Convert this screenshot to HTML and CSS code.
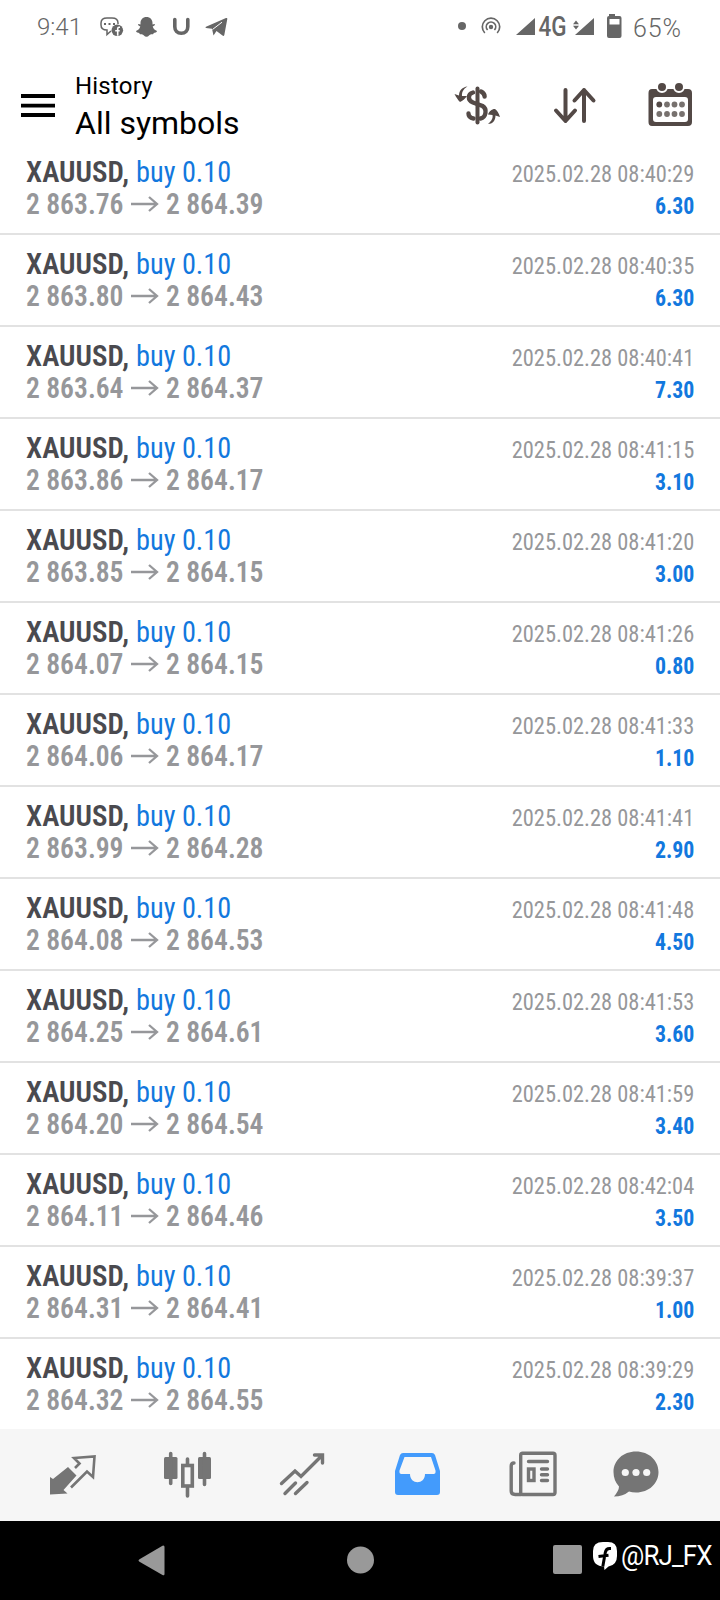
FILE: index.html
```html
<!DOCTYPE html>
<html lang="en">
<head>
<meta charset="utf-8">
<title>History</title>
<link rel="stylesheet" href="styles.css">
</head>
<body>
<main class="screen">
  <div class="status">
    <span class="clock">9:41</span>
    <svg class="status-apps" width="130" height="24" viewBox="99 15 130 24">
      <path d="M111 31l-4 3.500v-4.500c-4 0-6-2-6-5v-2c0-3 2-5 6-5h5c4 0 6 2 6 5v1" fill="none" stroke="#666" stroke-width="1.500"/>
      <path d="M104 24h2m2.500 0h2m2.500 0h2" stroke="#666" stroke-width="1.800"/>
      <circle cx="117.300" cy="30.300" r="5.800" fill="#666"/>
      <path d="M120 27.200h-1q-1.300 0-1.300 1.500v7m-2.500-5h4.500" fill="none" stroke="#fff" stroke-width="1.600"/>
      <path d="M146.500 17c3.700 0 6 2.700 6 6v1.500l2-.500c1 .5.500 1.600-1.800 2.600.8 2.500 2.400 3.800 4.300 4.400-.2 1.700-2.200 1.500-3.200 2-.5 1-.5 1.500-2.300 1.200-2-.4-2.600 2.500-5 2.500s-3-2.900-5-2.500c-1.800.3-1.800-.2-2.300-1.200-1-.5-3-.3-3.200-2 1.900-.6 3.500-1.900 4.300-4.400-2.300-1-2.800-2.100-1.800-2.600l2 .5V23c0-3.300 2.300-6 6-6z" fill="#666"/>
      <path d="M174.800 19.500v7.200c0 4 2.500 6.500 6.500 6.500s6.500-2.500 6.500-6.500v-7.200" fill="none" stroke="#666" stroke-width="3.600" stroke-linecap="round"/>
      <path d="M206 26.800L226 18q1.500-.4 1.300 1l-3 16q-.5 1.600-1.800.6l-6-4.600-3 4.500-1.500-6.800-6-.8q-1.200-.5 0-1.100z" fill="#666"/>
      <path d="M212.500 29.500l9.500-7.300" fill="none" stroke="#fff" stroke-width="1"/>
    </svg>
    <svg class="status-signal" width="169" height="28" viewBox="457 13 169 28">
      <g fill="#666"><circle cx="462" cy="26" r="4"/><circle cx="491" cy="27" r="2.200"/><path d="M516 35l19-17v17zM575 35l19-17v17zM573 24.200l3-3.700 3 3.700zM573 25.800l3 3.700 3-3.700z"/></g>
      <path d="M487.600 30a4.700 4.700 0 1 1 6.800 0M484.800 33a8.700 8.700 0 1 1 12.400 0" fill="none" stroke="#666" stroke-width="1.700"/>
      <path d="M609 16v-2h6v2h4.500q2 0 2 2v18q0 2-2 2H609q-2 0-2-2V18q0-2 2-2zM609.500 19v5.500h10V19z" fill="#666" fill-rule="evenodd"/>
      <text class="net" x="538.500" y="36" textLength="28" lengthAdjust="spacingAndGlyphs">4G</text>
    </svg>
    <span class="battery">65%</span>
  </div>
  <header class="head">
    <svg class="menu" width="34" height="24" viewBox="0 0 34 24"><path d="M0 2h34M0 11.600h34M0 21h34" stroke="#000" stroke-width="3.800"/></svg>
    <div class="titles"><div class="sub">History</div><h1>All symbols</h1></div>
    <svg width="240" height="46" viewBox="454 82 240 46">
      <g fill="none" stroke="#534946" stroke-linecap="round">
        <path d="M477.500 88.500v34" stroke-width="4"/>
        <path d="M473 92.500c-5.500 1.500-5.500 7.500 0 10l9.500 3.500c5 3 3.500 11.500-2 12.500M481 91.500c2.500 1.300 3.600 3 3.600 5M473.500 118.500c-3-.5-5-2.500-5-5" stroke-width="4.400"/>
        <path d="M565.500 90v31M556 110.500l9.500 10.500 9.500-10.500M584 121V90M574.500 100.500L584 90l9.500 10.500" stroke-width="4" stroke-linejoin="round"/>
      </g>
      <path d="M467.500 86.500c-4.500 2.500-5.800 6-5.500 9.500l5 0c-2 3-4.500 5-7 6-2-2-3.700-4.500-5.500-8l4.500 1.500c0-5 3.500-8.500 8.500-9zM488 124c4-3.500 5-6 4.500-9l-4.500-.5c1-3 3.500-5.500 7-5.500 2 1.500 3.800 4 5 8l-4.500-1.500c0 5-3 8.500-7.500 8.500z" fill="#534946"/>
      <path d="M652 89h36q4 0 4 4v29q0 4-4 4h-36q-3.500 0-3.500-4V93q0-4 3.500-4zm4 8q-3 0-3 3v19q0 3 3 3h29q3 0 3-3v-19q0-3-3-3z" fill="#534946" fill-rule="evenodd"/>
      <g fill="#534946" stroke="#fff" stroke-width="2"><circle cx="662" cy="87" r="5"/><circle cx="679" cy="87" r="5"/></g>
      <g fill="#77716e"><circle cx="659.300" cy="104.500" r="2.900" fill="#534946"/><circle cx="667" cy="104.500" r="2.900"/><circle cx="674.500" cy="104.500" r="2.900"/><circle cx="682" cy="104.500" r="2.900"/><circle cx="659.300" cy="114" r="2.900"/><circle cx="667" cy="114" r="2.900"/><circle cx="674.500" cy="114" r="2.900"/><circle cx="682" cy="114" r="2.900"/></g>
    </svg>
  </header>
  <svg class="defs" width="0" height="0"><symbol id="arrow" viewBox="0 0 28 16"><path d="M0 8h26M18 1l8 7-8 7" fill="none" stroke="#96979a" stroke-width="2.300"/></symbol></svg>
  <section class="deals">
    <article class="deal"><div class="line"><b>XAUUSD,</b><span class="side">buy 0.10</span><time>2025.02.28 08:40:29</time></div><div class="line prices"><i>2 863.76</i><svg><use href="#arrow"/></svg><i>2 864.39</i><strong>6.30</strong></div></article>
    <article class="deal"><div class="line"><b>XAUUSD,</b><span class="side">buy 0.10</span><time>2025.02.28 08:40:35</time></div><div class="line prices"><i>2 863.80</i><svg><use href="#arrow"/></svg><i>2 864.43</i><strong>6.30</strong></div></article>
    <article class="deal"><div class="line"><b>XAUUSD,</b><span class="side">buy 0.10</span><time>2025.02.28 08:40:41</time></div><div class="line prices"><i>2 863.64</i><svg><use href="#arrow"/></svg><i>2 864.37</i><strong>7.30</strong></div></article>
    <article class="deal"><div class="line"><b>XAUUSD,</b><span class="side">buy 0.10</span><time>2025.02.28 08:41:15</time></div><div class="line prices"><i>2 863.86</i><svg><use href="#arrow"/></svg><i>2 864.17</i><strong>3.10</strong></div></article>
    <article class="deal"><div class="line"><b>XAUUSD,</b><span class="side">buy 0.10</span><time>2025.02.28 08:41:20</time></div><div class="line prices"><i>2 863.85</i><svg><use href="#arrow"/></svg><i>2 864.15</i><strong>3.00</strong></div></article>
    <article class="deal"><div class="line"><b>XAUUSD,</b><span class="side">buy 0.10</span><time>2025.02.28 08:41:26</time></div><div class="line prices"><i>2 864.07</i><svg><use href="#arrow"/></svg><i>2 864.15</i><strong>0.80</strong></div></article>
    <article class="deal"><div class="line"><b>XAUUSD,</b><span class="side">buy 0.10</span><time>2025.02.28 08:41:33</time></div><div class="line prices"><i>2 864.06</i><svg><use href="#arrow"/></svg><i>2 864.17</i><strong>1.10</strong></div></article>
    <article class="deal"><div class="line"><b>XAUUSD,</b><span class="side">buy 0.10</span><time>2025.02.28 08:41:41</time></div><div class="line prices"><i>2 863.99</i><svg><use href="#arrow"/></svg><i>2 864.28</i><strong>2.90</strong></div></article>
    <article class="deal"><div class="line"><b>XAUUSD,</b><span class="side">buy 0.10</span><time>2025.02.28 08:41:48</time></div><div class="line prices"><i>2 864.08</i><svg><use href="#arrow"/></svg><i>2 864.53</i><strong>4.50</strong></div></article>
    <article class="deal"><div class="line"><b>XAUUSD,</b><span class="side">buy 0.10</span><time>2025.02.28 08:41:53</time></div><div class="line prices"><i>2 864.25</i><svg><use href="#arrow"/></svg><i>2 864.61</i><strong>3.60</strong></div></article>
    <article class="deal"><div class="line"><b>XAUUSD,</b><span class="side">buy 0.10</span><time>2025.02.28 08:41:59</time></div><div class="line prices"><i>2 864.20</i><svg><use href="#arrow"/></svg><i>2 864.54</i><strong>3.40</strong></div></article>
    <article class="deal"><div class="line"><b>XAUUSD,</b><span class="side">buy 0.10</span><time>2025.02.28 08:42:04</time></div><div class="line prices"><i>2 864.11</i><svg><use href="#arrow"/></svg><i>2 864.46</i><strong>3.50</strong></div></article>
    <article class="deal"><div class="line"><b>XAUUSD,</b><span class="side">buy 0.10</span><time>2025.02.28 08:39:37</time></div><div class="line prices"><i>2 864.31</i><svg><use href="#arrow"/></svg><i>2 864.41</i><strong>1.00</strong></div></article>
    <article class="deal"><div class="line"><b>XAUUSD,</b><span class="side">buy 0.10</span><time>2025.02.28 08:39:29</time></div><div class="line prices"><i>2 864.32</i><svg><use href="#arrow"/></svg><i>2 864.55</i><strong>2.30</strong></div></article>
  </section>
  <nav class="tabs">
    <svg width="48" height="48" viewBox="48 1450 48 48"><path d="M50 1477l3 2 15-12 8.500 8.500-13 14.500 4 3.500-17.500 1z" fill="#757575"/><path d="M75 1468l4.500-4.500-5.500-5.500 20.500-1.500-1.500 20.500-6-5.500-16 16" fill="none" stroke="#757575" stroke-width="2.600"/></svg>
    <svg width="48" height="48" viewBox="163 1450 48 48"><g fill="#757575"><rect x="164" y="1457" width="13.500" height="22" rx="1.500"/><rect x="198" y="1457" width="13" height="22" rx="1.500"/></g><g fill="none" stroke="#757575" stroke-width="3.600" stroke-linecap="round"><path d="M170.700 1453.500v30M204.500 1453.500v31M187.500 1459v5M187.500 1488v8"/><rect x="182.800" y="1465.500" width="9.500" height="20.500"/></g></svg>
    <svg width="48" height="48" viewBox="279 1450 48 48"><path d="M281.500 1483.500l13.500-12.500 6 5.500 20-20M314.500 1455h8v8M285 1493.500l10.500-10.500M295.500 1493.500l11.500-11" fill="none" stroke="#757575" stroke-width="3.400" stroke-linecap="round"/></svg>
    <svg width="48" height="48" viewBox="394 1450 48 48"><path d="M403 1453h29q2 0 3 2l5 16v21q0 3-3 3h-39q-3 0-3-3v-21l5-16q1-2 3-2zm1.500 4l-5 13.500q-.5 3.500 2 3.500h8.500c0 11 15 11 15 0h8.500q2.500 0 2-3.500L431 1457z" fill="#439bfc" fill-rule="evenodd"/></svg>
    <svg width="48" height="48" viewBox="509 1450 48 48"><g fill="none" stroke="#757575" stroke-width="3.400" stroke-linecap="round"><rect x="520.700" y="1453.200" width="34.300" height="41.300" rx="2"/><path d="M514 1463q-2.800 0-2.800 3v25q0 3.500 4 3.500h6M528.500 1461.500h19M541.500 1469h6M541.500 1474.700h6M541.500 1480.500h6"/></g><rect x="528.500" y="1469" width="5.500" height="11.500" fill="none" stroke="#757575" stroke-width="3.400"/></svg>
    <svg width="48" height="48" viewBox="612 1450 48 48"><path d="M636 1451.500c13 0 22.500 9 22.500 20.500s-9.500 20.500-22.500 20.500q-4 0-7-1-6 5-15 5 5-6 5-10-5.500-6-5.500-14.500c0-11.500 9.500-20.500 22.500-20.500z" fill="#757575"/><g fill="#f6f6f6"><circle cx="625.300" cy="1472.500" r="3.600"/><circle cx="636" cy="1472.500" r="3.600"/><circle cx="646.700" cy="1472.500" r="3.600"/></g></svg>
  </nav>
  <footer class="system">
    <svg width="97" height="32" viewBox="138 1544 97 32"><path d="M139.500 1559.200l23-13.500q2-.8 2 1.300v27q0 2-2 1l-23-13.300q-2-1.200 0-2.500z" fill="#999"/></svg>
    <svg width="27" height="28" viewBox="0 0 27 28"><circle cx="13.500" cy="14" r="13.500" fill="#999"/></svg>
    <svg class="recent" width="29" height="29" viewBox="0 0 29 29"><rect width="29" height="29" rx="2" fill="#999"/></svg>
    <div class="handle"><svg width="26" height="30" viewBox="592 1542 26 30"><path d="M603 1543h5q9 0 9 9v5q0 9-8.500 10.500l-4 3.500-.5-3.500q-11-.5-11-10.500v-5q0-9 10-9z" fill="#fff"/><path d="M611 1549.500h-1.500q-3.500 0-4.200 4l-2.500 14M598.500 1557.500l10-1.200" fill="none" stroke="#000" stroke-width="3"/></svg><span>@RJ_FX</span></div>
  </footer>
</main>
</body>
</html>
```

FILE: styles.css
```css
* { box-sizing: border-box; }
body { margin: 0; background: #fff; font-family: Roboto, "Liberation Sans", sans-serif; }
svg { display: block; flex: none; }
.screen { width: 720px; height: 1600px; display: flex; flex-direction: column; overflow: hidden; }
.status { height: 54px; flex: none; display: flex; align-items: center; padding: 0 34px 0 37px; color: #666; font-size: 24px; white-space: nowrap; }
.clock { width: 62px; font-weight: 300; }
.status-signal { margin-left: auto; overflow: visible; }
.net { font-size: 27px; font-weight: 500; fill: #666; }
.battery { width: 60px; padding: 2px 0 0 7px; font-weight: 300; font-size: 25px; letter-spacing: .9px; }
.head { height: 97px; flex: none; display: flex; align-items: center; padding: 4px 26px 0 21px; }
.menu { margin: 2px 20px 0 0; }
.titles { flex: 1; padding-top: 6px; white-space: nowrap; }
.sub { font-size: 24px; line-height: 30px; letter-spacing: .2px; }
h1 { margin: 0; font-size: 32px; line-height: 44px; font-weight: 400; }
.defs { position: absolute; }
.deals { height: 1278px; flex: none; }
.deal { height: 92px; padding: 13px 26px 0; border-bottom: 2px solid #e2e2e2; font-family: "Roboto Condensed", Roboto, sans-serif; font-stretch: 75%; }
.deal:first-child { height: 84px; padding-top: 5px; }
.deal:last-child { height: 90px; border-bottom: 0; }
.line { height: 32px; display: flex; align-items: baseline; font-size: 30px; line-height: 32px; white-space: nowrap; }
/* The list face is set slightly narrower than the condensed width. */
b, .side, i { transform-origin: 0 50%; }
time, strong { transform-origin: 100% 50%; }
b { font-weight: 600; color: #4a4a4f; transform: scaleX(.965); }
.side { margin-left: 3px; color: #1278de; transform: scaleX(.943); }
time { margin-left: auto; font-size: 24px; color: #96979a; transform: scaleX(.935); }
i { width: 98px; font-style: normal; font-weight: 600; color: #96979a; transform: scaleX(.92); }
.line svg { width: 28px; height: 16px; margin: 0 7px; align-self: center; }
strong { margin-left: auto; font-size: 24px; font-weight: 700; color: #1278de; transform: scaleX(.91); }
.tabs { height: 92px; flex: none; display: flex; gap: 67.300px; padding: 21px 0 0 48px; background: #f6f6f6; }
.tabs svg:last-child { margin-left: -12px; }
.system { flex: 1; display: flex; align-items: center; padding: 0 0 2px 138px; background: #000; }
.system > svg:nth-child(2) { margin-left: 112px; }
.recent { margin-left: 179px; }
.handle { width: 120px; display: flex; align-items: center; gap: 3px; margin: -8px 0 0 10px; font-size: 28px; letter-spacing: -.9px; color: #fff; }
.handle span { transform: scaleX(.925); transform-origin: 0 50%; }
```
